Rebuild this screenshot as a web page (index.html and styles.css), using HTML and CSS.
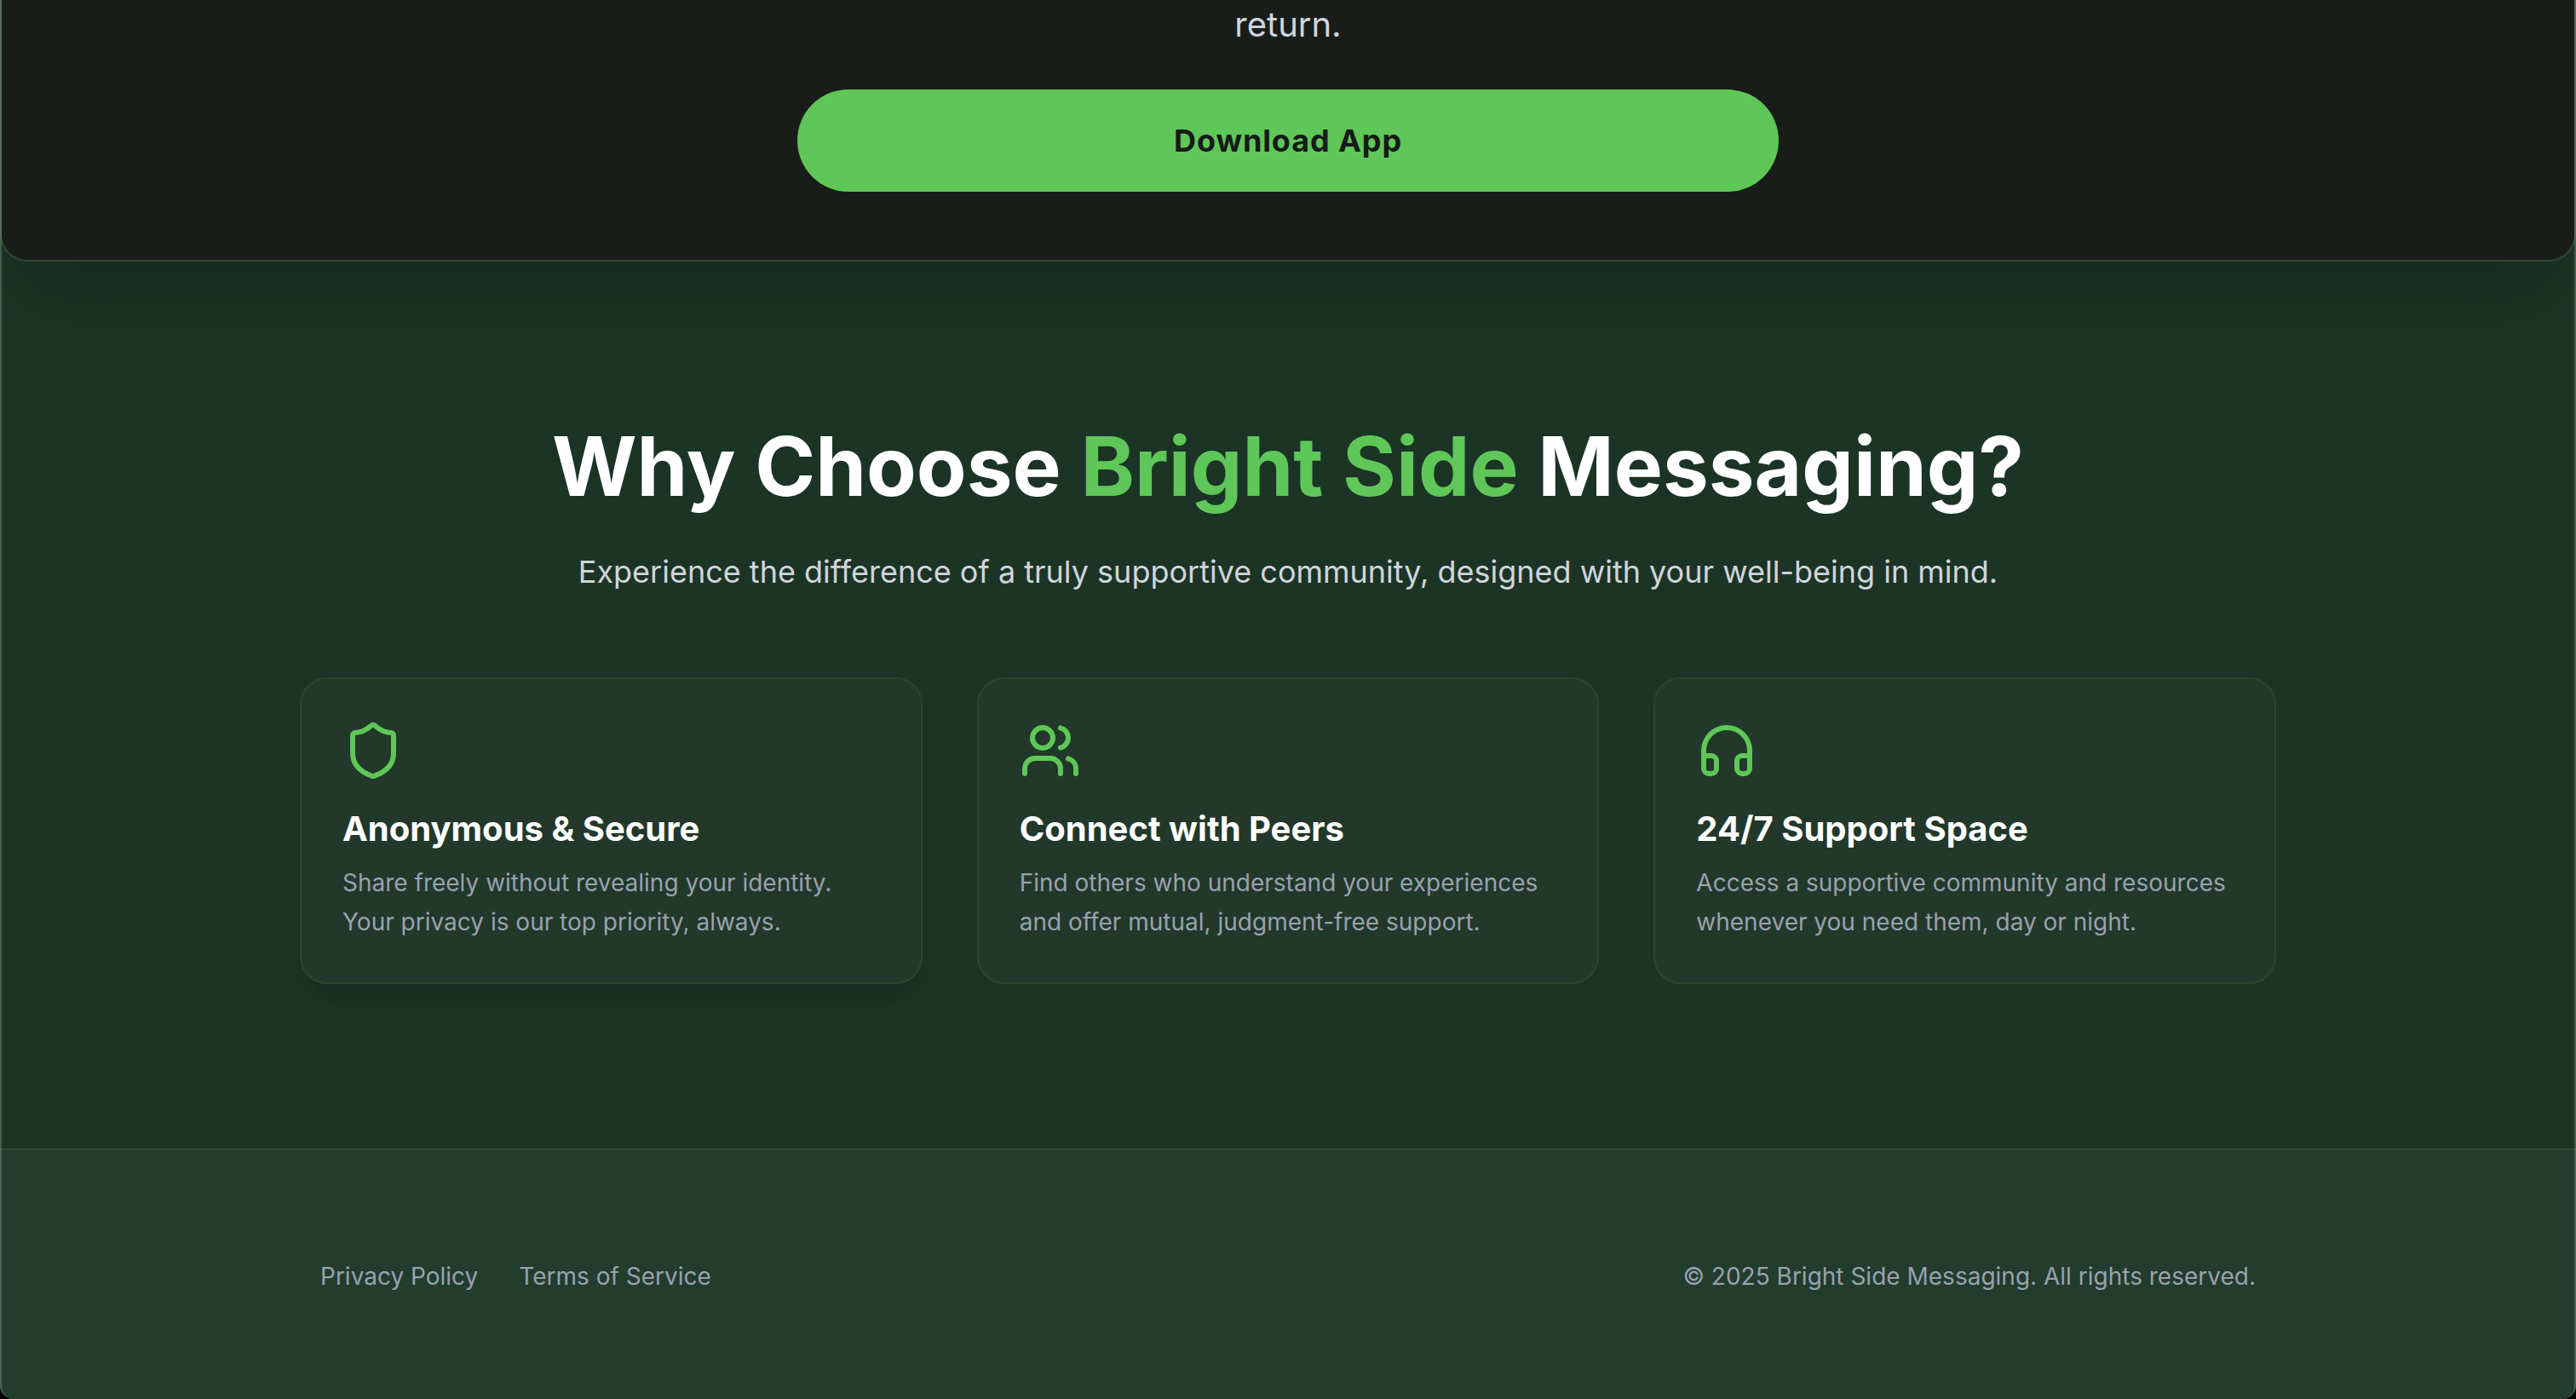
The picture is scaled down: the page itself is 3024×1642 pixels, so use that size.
FILE: index.html
```html
<!DOCTYPE html>
<html lang="en">
<head>
<meta charset="utf-8">
<title>Bright Side Messaging</title>
<link rel="stylesheet" href="styles.css">
</head>
<body>
<div class="frame">
  <section class="hero">
    <p class="hero-text">return.</p>
    <button class="download" type="button">Download App</button>
  </section>
  <main class="features">
    <h2 class="features-title">Why Choose <span class="accent">Bright Side</span> Messaging?</h2>
    <p class="features-lead">Experience the difference of a truly supportive community, designed with your well-being in mind.</p>
    <div class="cards">
      <article class="card card-raised">
        <svg class="icon" viewBox="0 0 24 24" aria-hidden="true"><path d="M20 13c0 5-3.500 7.500-7.660 8.950a1 1 0 0 1-.670-.010C7.500 20.500 4 18 4 13V6a1 1 0 0 1 1-1c2 0 4.500-1.200 6.240-2.720a1.170 1.170 0 0 1 1.520 0C14.510 3.810 17 5 19 5a1 1 0 0 1 1 1z"/></svg>
        <h3 class="card-title">Anonymous &amp; Secure</h3>
        <p class="card-text">Share freely without revealing your identity. Your privacy is our top priority, always.</p>
      </article>
      <article class="card">
        <svg class="icon" viewBox="0 0 24 24" aria-hidden="true"><path d="M16 21v-2a4 4 0 0 0-4-4H6a4 4 0 0 0-4 4v2"/><circle cx="9" cy="7" r="4"/><path d="M22 21v-2a4 4 0 0 0-3-3.870"/><path d="M16 3.130a4 4 0 0 1 0 7.750"/></svg>
        <h3 class="card-title">Connect with Peers</h3>
        <p class="card-text">Find others who understand your experiences and offer mutual, judgment-free support.</p>
      </article>
      <article class="card">
        <svg class="icon" viewBox="0 0 24 24" aria-hidden="true"><path d="M3 14h3a2 2 0 0 1 2 2v3a2 2 0 0 1-2 2H5a2 2 0 0 1-2-2v-7a9 9 0 0 1 18 0v7a2 2 0 0 1-2 2h-1a2 2 0 0 1-2-2v-3a2 2 0 0 1 2-2h3"/></svg>
        <h3 class="card-title">24/7 Support Space</h3>
        <p class="card-text">Access a supportive community and resources whenever you need them, day or night.</p>
      </article>
    </div>
  </main>
  <footer class="footer">
    <div class="footer-inner">
      <nav class="footer-links">
        <a href="#privacy">Privacy Policy</a>
        <a href="#terms">Terms of Service</a>
      </nav>
      <p class="copyright">© 2025 Bright Side Messaging. All rights reserved.</p>
    </div>
  </footer>
</div>
</body>
</html>
```
FILE: styles.css
```css
* {
  box-sizing: border-box;
}

body,
h2,
h3,
p {
  margin: 0;
}

body {
  background: #000;
  color: #fff;
  font-family: Inter, "Liberation Sans", sans-serif;
}

.frame {
  position: relative;
  display: flex;
  flex-direction: column;
  min-height: 100vh;
  overflow: hidden;
  border-radius: 0 0 16px 16px;
  background: #1c3426;
}

/* Translucent window edge, drawn over the page content */
.frame::after {
  content: "";
  position: absolute;
  inset: 0;
  border: solid rgba(255, 255, 255, 0.2);
  border-width: 0 2px;
  border-radius: inherit;
  pointer-events: none;
}

.hero {
  display: flex;
  flex-direction: column;
  align-items: center;
  gap: 48px;
  padding: 0 48px 80px;
  border: 2px solid #2e4a30;
  border-top: 0;
  border-radius: 0 0 32px 32px;
  background: #191d1a;
  box-shadow: 0 50px 100px -24px rgba(0, 0, 0, 0.25);
}

.hero-text {
  color: #d1d5db;
  font-size: 40px;
  line-height: 57px;
}

.download {
  width: 100%;
  max-width: 1152px;
  padding: 32px 64px;
  border: 0;
  border-radius: 60px;
  background: #5ec757;
  color: #171a18;
  font-family: inherit;
  font-size: 36px;
  font-weight: 700;
  line-height: 56px;
  letter-spacing: 0.025em;
}

.features {
  flex: 1;
  padding: 192px 48px;
  text-align: center;
}

.features-title {
  font-size: 96px;
  font-weight: 700;
  line-height: 96px;
}

.accent {
  color: #5ec757;
}

.features-lead {
  margin-top: 48px;
  color: #d1d5db;
  font-size: 36px;
  line-height: 56px;
}

.cards {
  display: grid;
  grid-template-columns: repeat(3, 1fr);
  gap: 64px;
  max-width: 2320px;
  margin: 96px auto 0;
  text-align: left;
}

.card {
  padding: 48px;
  border: 2px solid #2b452e;
  border-radius: 32px;
  background: #22382a;
}

.card-raised {
  box-shadow: 0 40px 50px -10px rgba(0, 0, 0, 0.08), 0 16px 20px -12px rgba(0, 0, 0, 0.1);
}

.icon {
  display: block;
  width: 72px;
  height: 72px;
  fill: none;
  stroke: #5ec757;
  stroke-width: 2;
  stroke-linecap: round;
  stroke-linejoin: round;
}

.card-title {
  margin: 28px 0 12px;
  font-size: 40px;
  font-weight: 700;
  line-height: 56px;
}

.card-text {
  color: #99a1af;
  font-size: 28px;
  line-height: 46px;
}

.footer {
  padding: 128px 48px 124px;
  border-top: 2px solid #314a3b;
  background: #223c2d;
}

.footer-inner {
  display: flex;
  justify-content: space-between;
  max-width: 2272px;
  margin: 0 auto;
  color: #99a1af;
  font-size: 28px;
  line-height: 40px;
}

.footer-links {
  display: flex;
  gap: 48px;
}

.footer-links a {
  color: inherit;
  text-decoration: none;
}
```
